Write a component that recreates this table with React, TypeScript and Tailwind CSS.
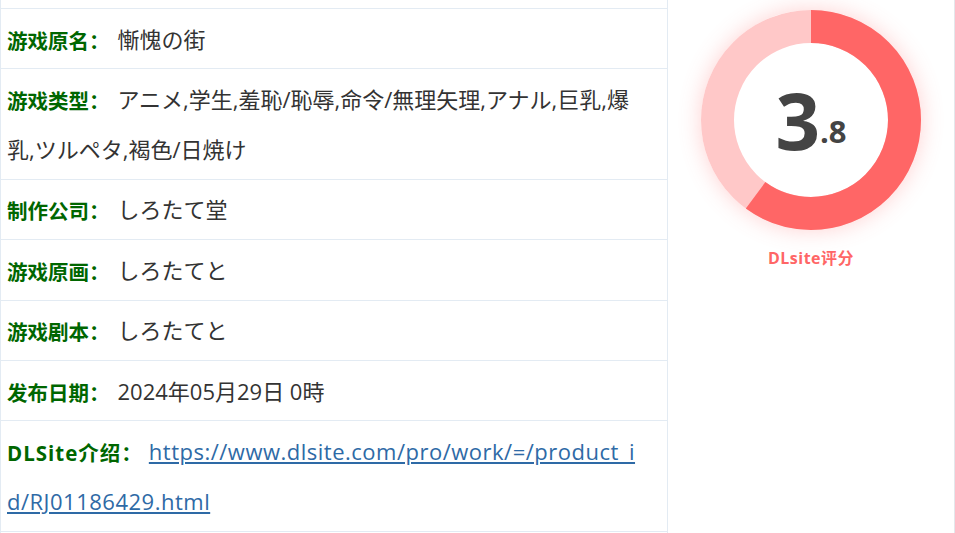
import React from "react";

const font = { fontFamily: '"Open Sans", "Noto Sans CJK SC", sans-serif' };

const rowCls =
  "shrink-0 border-b border-[#e3ebf3] px-[6px] py-[4.7px] text-[22px] leading-[50px] text-[#333333] whitespace-nowrap";
const labelCls = "relative top-[2px] align-top font-bold text-[#006600] text-[20.5px]";

function Row({ label, children }: { label: string; children: React.ReactNode }) {
  return (
    <div className={rowCls}>
      <span className={labelCls}>{label}</span>
      <span className="align-top ml-[8px]">{children}</span>
    </div>
  );
}

export default function App() {
  const r = 93.5;
  const c = 2 * Math.PI * r;
  const frac = 0.6;
  return (
    <div className="w-[955px] h-[533px] overflow-hidden bg-white flex" style={font}>
      <div className="w-[668px] shrink-0 border-l border-r border-[#e3ebf3] flex flex-col">
        <div className="shrink-0 h-[9px] border-b border-[#e3ebf3]" />
        <Row label="游戏原名：">慚愧の街</Row>
        <div className={rowCls}>
          <span className={labelCls}>游戏类型：</span>
          <span className="align-top ml-[8px]">アニメ,学生,羞恥/恥辱,命令/無理矢理,アナル,巨乳,爆</span>
          <br />
          <span className="align-top">乳,ツルペタ,褐色/日焼け</span>
        </div>
        <Row label="制作公司：">しろたて堂</Row>
        <Row label="游戏原画：">しろたてと</Row>
        <Row label="游戏剧本：">しろたてと</Row>
        <Row label="发布日期：">2024年05月29日 0時</Row>
        <div className={rowCls}>
          <span className={labelCls + " tracking-[1px]"}>DLSite介绍：</span>
          <a className="align-top ml-[6px] text-[#2e6aa6] underline tracking-[0.5px]" href="#">
            https://www.dlsite.com/pro/work/=/product_i
            <br />
            d/RJ01186429.html
          </a>
        </div>
      </div>
      <div className="w-[286px] shrink-0 flex flex-col items-center pt-[10px]">
        <div className="relative shrink-0 w-[220px] h-[220px] rounded-full shadow-[0_0_22px_rgba(255,102,102,0.3)]">
          <svg width="220" height="220" viewBox="0 0 220 220" className="absolute inset-0">
            <circle cx="110" cy="110" r={r} fill="none" stroke="#ffc8c8" strokeWidth="33" />
            <circle
              cx="110"
              cy="110"
              r={r}
              fill="none"
              stroke="#ff6666"
              strokeWidth="33"
              strokeDasharray={`${c * frac} ${c}`}
              transform="rotate(-90 110 110)"
            />
          </svg>
          <div className="absolute inset-0 flex items-center justify-center">
            <span className="font-bold text-[#444444] text-[78px] leading-none">3</span>
            <span className="font-bold text-[#444444] text-[31px] leading-none mt-[22px]">.8</span>
          </div>
        </div>
        <div className="mt-[18px] text-[16px] font-bold text-[#ff6666] leading-[20px] tracking-[0.5px]">DLsite评分</div>
      </div>
      <div className="w-[1px] bg-[#e4e7eb]" />
    </div>
  );
}
